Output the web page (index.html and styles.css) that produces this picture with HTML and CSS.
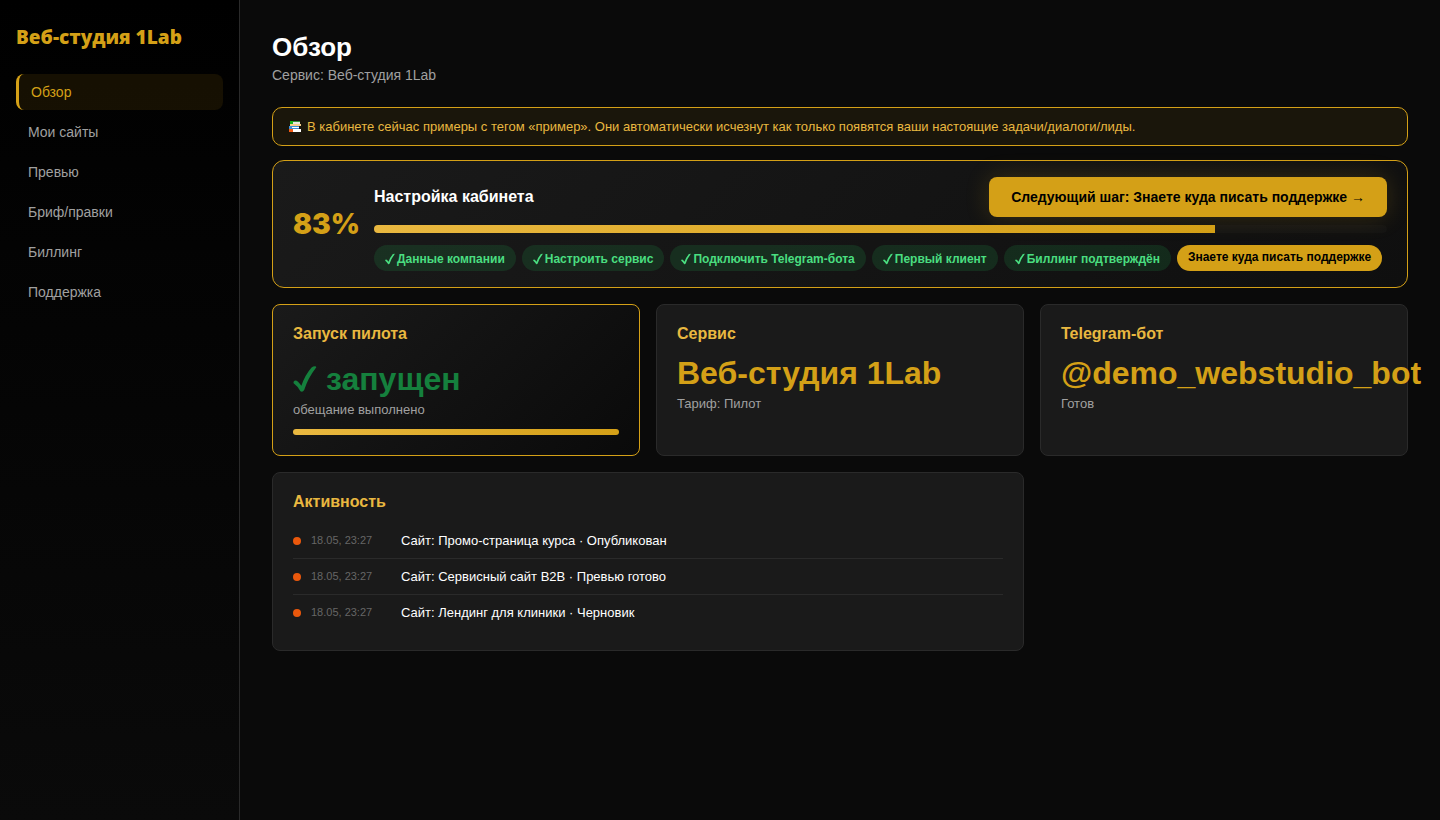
FILE: index.html
```
<!DOCTYPE html>
<html lang="ru">
<head>
    <meta charset="UTF-8">
    <meta name="viewport" content="width=device-width, initial-scale=1.0">
    <title>Обзор — Веб-студия 1Lab</title>
    <link rel="stylesheet" href="styles.css">
</head>
<body>
    <svg class="sprite" aria-hidden="true">
        <symbol id="check" viewBox="0 0 24 28">
            <path d="M0.6 18.2 Q0 15.8 2.6 15.4 Q4.6 15.4 8.4 20.8 Q12 10 18.6 2.6 Q20.4 1 23 1.4 Q23.8 1.8 22.6 3.2 Q15 13 11.2 25 Q9.6 27.6 7.4 26.2 Q4.6 21 0.6 18.2 Z" fill="currentColor"/>
        </symbol>
    </svg>

    <div class="app">
        <aside class="sidebar">
            <div class="brand">Веб-студия 1Lab</div>
            <nav class="nav">
                <a href="#" class="active">Обзор</a>
                <a href="#">Мои сайты</a>
                <a href="#">Превью</a>
                <a href="#">Бриф/правки</a>
                <a href="#">Биллинг</a>
                <a href="#">Поддержка</a>
            </nav>
        </aside>

        <main class="main">
            <header class="page-head">
                <h1>Обзор</h1>
                <p>Сервис: Веб-студия 1Lab</p>
            </header>

            <div class="notice">
                <svg class="books" viewBox="0 0 12 11" aria-hidden="true">
                    <path d="M1 0h10v1H4v2H1z" fill="#2f8f3a"/>
                    <path d="M1 0h3v3H1z" fill="#16b516"/>
                    <path d="M4 1h7v2H4z" fill="#e9e9e0"/>
                    <path d="M1 3h11v2H1z" fill="#f5cf8c"/>
                    <path d="M0 5h10v3H0z" fill="#3a8fd6"/>
                    <path d="M3 6h7v1H3z" fill="#fff"/>
                    <path d="M0 8h12v3H0z" fill="#f05a14"/>
                    <path d="M4 8h8v3H4z" fill="#fff"/>
                </svg>
                <span>В кабинете сейчас примеры с тегом «пример». Они автоматически исчезнут как только появятся ваши настоящие задачи/диалоги/лиды.</span>
            </div>

            <section class="setup">
                <div class="setup-percent">83%</div>
                <div class="setup-body">
                    <div class="setup-head">
                        <h2>Настройка кабинета</h2>
                        <button type="button" class="next-btn">Следующий шаг: Знаете куда писать поддержке →</button>
                    </div>
                    <div class="bar"><div class="bar-fill" style="width: 83%"></div></div>
                    <div class="steps">
                        <span class="step"><svg class="check"><use href="#check"/></svg>Данные компании</span>
                        <span class="step"><svg class="check"><use href="#check"/></svg>Настроить сервис</span>
                        <span class="step"><svg class="check"><use href="#check"/></svg>Подключить Telegram-бота</span>
                        <span class="step"><svg class="check"><use href="#check"/></svg>Первый клиент</span>
                        <span class="step"><svg class="check"><use href="#check"/></svg>Биллинг подтверждён</span>
                        <a href="#" class="step current">Знаете куда писать поддержке</a>
                    </div>
                </div>
            </section>

            <div class="grid">
                <section class="card pilot">
                    <h3>Запуск пилота</h3>
                    <div class="value done"><svg class="check"><use href="#check"/></svg>запущен</div>
                    <p class="sub">обещание выполнено</p>
                    <div class="bar thin"><div class="bar-fill" style="width: 100%"></div></div>
                </section>
                <section class="card">
                    <h3>Сервис</h3>
                    <div class="value">Веб-студия 1Lab</div>
                    <p class="sub">Тариф: Пилот</p>
                </section>
                <section class="card">
                    <h3>Telegram-бот</h3>
                    <div class="value">@demo_webstudio_bot</div>
                    <p class="sub">Готов</p>
                </section>
                <section class="card wide">
                    <h3>Активность</h3>
                    <ul class="activity">
                        <li><i class="dot"></i><time>18.05, 23:27</time><span>Сайт: Промо-страница курса · Опубликован</span></li>
                        <li><i class="dot"></i><time>18.05, 23:27</time><span>Сайт: Сервисный сайт B2B · Превью готово</span></li>
                        <li><i class="dot"></i><time>18.05, 23:27</time><span>Сайт: Лендинг для клиники · Черновик</span></li>
                    </ul>
                </section>
            </div>
        </main>
    </div>
</body>
</html>
```
FILE: styles.css
```
:root {
    --gold: #d4a017;
    --gold-light: #e9b840;
    --bg: #0a0a0a;
    --card: #1a1a1a;
    --line: #2a2a2a;
    --muted: #a0a0a0;
}
* {
    box-sizing: border-box;
}
body {
    margin: 0;
    background: var(--bg);
    color: #fff;
    font-family: "Liberation Sans", Arial, sans-serif;
    font-size: 14px;
}
h1, h2, h3, p, ul {
    margin: 0;
    padding: 0;
}
.sprite {
    display: none;
}
.app {
    display: grid;
    grid-template-columns: 240px 1fr;
    min-height: 100vh;
}

/* sidebar */
.sidebar {
    padding: 24px 16px;
    background: linear-gradient(180deg, #000, var(--bg));
    border-right: 1px solid var(--line);
}
.brand {
    margin-bottom: 24px;
    color: var(--gold);
    font-family: "Open Sans", "Liberation Sans", sans-serif;
    font-size: 19px;
    font-weight: 800;
    line-height: 26px;
}
.nav {
    display: flex;
    flex-direction: column;
    gap: 4px;
}
.nav a {
    padding: 10px 12px;
    border-radius: 8px;
    color: var(--muted);
    line-height: 16px;
    text-decoration: none;
}
.nav a.active {
    border-left: 3px solid var(--gold);
    background: rgba(212, 160, 23, 0.1);
    color: var(--gold);
}

/* content */
.main {
    min-width: 0;
    padding: 32px;
}
.page-head {
    margin-bottom: 22px;
}
.page-head h1 {
    margin-bottom: 4px;
    font-size: 26px;
    line-height: 30px;
}
.page-head p {
    color: var(--muted);
    line-height: 19px;
}
.notice {
    display: flex;
    align-items: center;
    gap: 6px;
    margin-bottom: 14px;
    padding: 10px 16px;
    border: 1px solid var(--gold);
    border-radius: 10px;
    background: rgba(212, 160, 23, 0.08);
    color: var(--gold-light);
    font-size: 13px;
    line-height: 17px;
}
.books {
    width: 12px;
    height: 11px;
}

/* setup progress */
.setup {
    display: flex;
    align-items: center;
    gap: 14px;
    margin-bottom: 16px;
    padding: 16px 20px;
    border: 1px solid var(--gold);
    border-radius: 12px;
    background: linear-gradient(135deg, var(--card), #0f0f0f);
}
.setup-percent {
    color: var(--gold);
    font-family: Inter, "Liberation Sans", sans-serif;
    font-size: 28px;
    font-weight: 900;
}
.setup-body {
    flex: 1;
    min-width: 0;
}
.setup-head {
    display: flex;
    align-items: center;
    justify-content: space-between;
    margin-bottom: 8px;
}
.setup-head h2 {
    font-size: 16px;
}
.next-btn {
    padding: 12px 22px;
    border: 0;
    border-radius: 8px;
    background: var(--gold);
    box-shadow: 0 0 24px rgba(212, 160, 23, 0.2);
    color: #000;
    font: bold 14px/16px "Liberation Sans", Arial, sans-serif;
    cursor: pointer;
}
.bar {
    height: 8px;
    border-radius: 4px;
    background: rgba(255, 255, 255, 0.02);
    overflow: hidden;
}
.bar-fill {
    height: 100%;
    background: linear-gradient(90deg, var(--gold-light), var(--gold));
}
.bar.thin {
    height: 6px;
    margin-top: 10px;
}
.steps {
    display: flex;
    flex-wrap: wrap;
    gap: 6px;
    margin-top: 12px;
}
.step {
    display: flex;
    align-items: center;
    gap: 2px;
    padding: 7px 11px 5px;
    border-radius: 13px;
    background: rgba(34, 197, 94, 0.14);
    color: #4ade80;
    font-size: 12px;
    font-weight: bold;
    line-height: 14px;
}
.step .check {
    width: 10px;
    height: 12px;
}
.step.current {
    padding: 5px 11px 7px;
    background: var(--gold);
    color: #000;
    text-decoration: none;
}

/* cards */
.grid {
    display: grid;
    grid-template-columns: repeat(3, minmax(0, 1fr));
    gap: 16px;
}
.card {
    padding: 20px;
    border: 1px solid var(--line);
    border-radius: 8px;
    background: var(--card);
}
.card.pilot {
    border-color: var(--gold);
    background: linear-gradient(135deg, var(--card), var(--bg));
}
.card.wide {
    grid-column: span 2;
}
.card h3 {
    margin-bottom: 12px;
    color: var(--gold-light);
    font-size: 16px;
    line-height: 18px;
}
.value {
    color: var(--gold);
    font-size: 32px;
    font-weight: bold;
    line-height: 36px;
}
.value.done {
    display: flex;
    align-items: center;
    gap: 9px;
    padding-top: 6px;
    color: #15803d;
}
.value .check {
    width: 24px;
    height: 28px;
}
.sub {
    margin-top: 4px;
    color: var(--muted);
    font-size: 13px;
    line-height: 18px;
}

/* activity feed */
.activity {
    list-style: none;
}
.activity li {
    display: flex;
    align-items: center;
    gap: 10px;
    padding: 10px 0;
    border-bottom: 1px solid var(--line);
    font-size: 13px;
    line-height: 15px;
}
.activity li:last-child {
    border-bottom: 0;
}
.activity time {
    width: 80px;
    color: #666;
    font-size: 11px;
}
.dot {
    width: 8px;
    height: 8px;
    border-radius: 50%;
    background: #ea580c;
}
```
